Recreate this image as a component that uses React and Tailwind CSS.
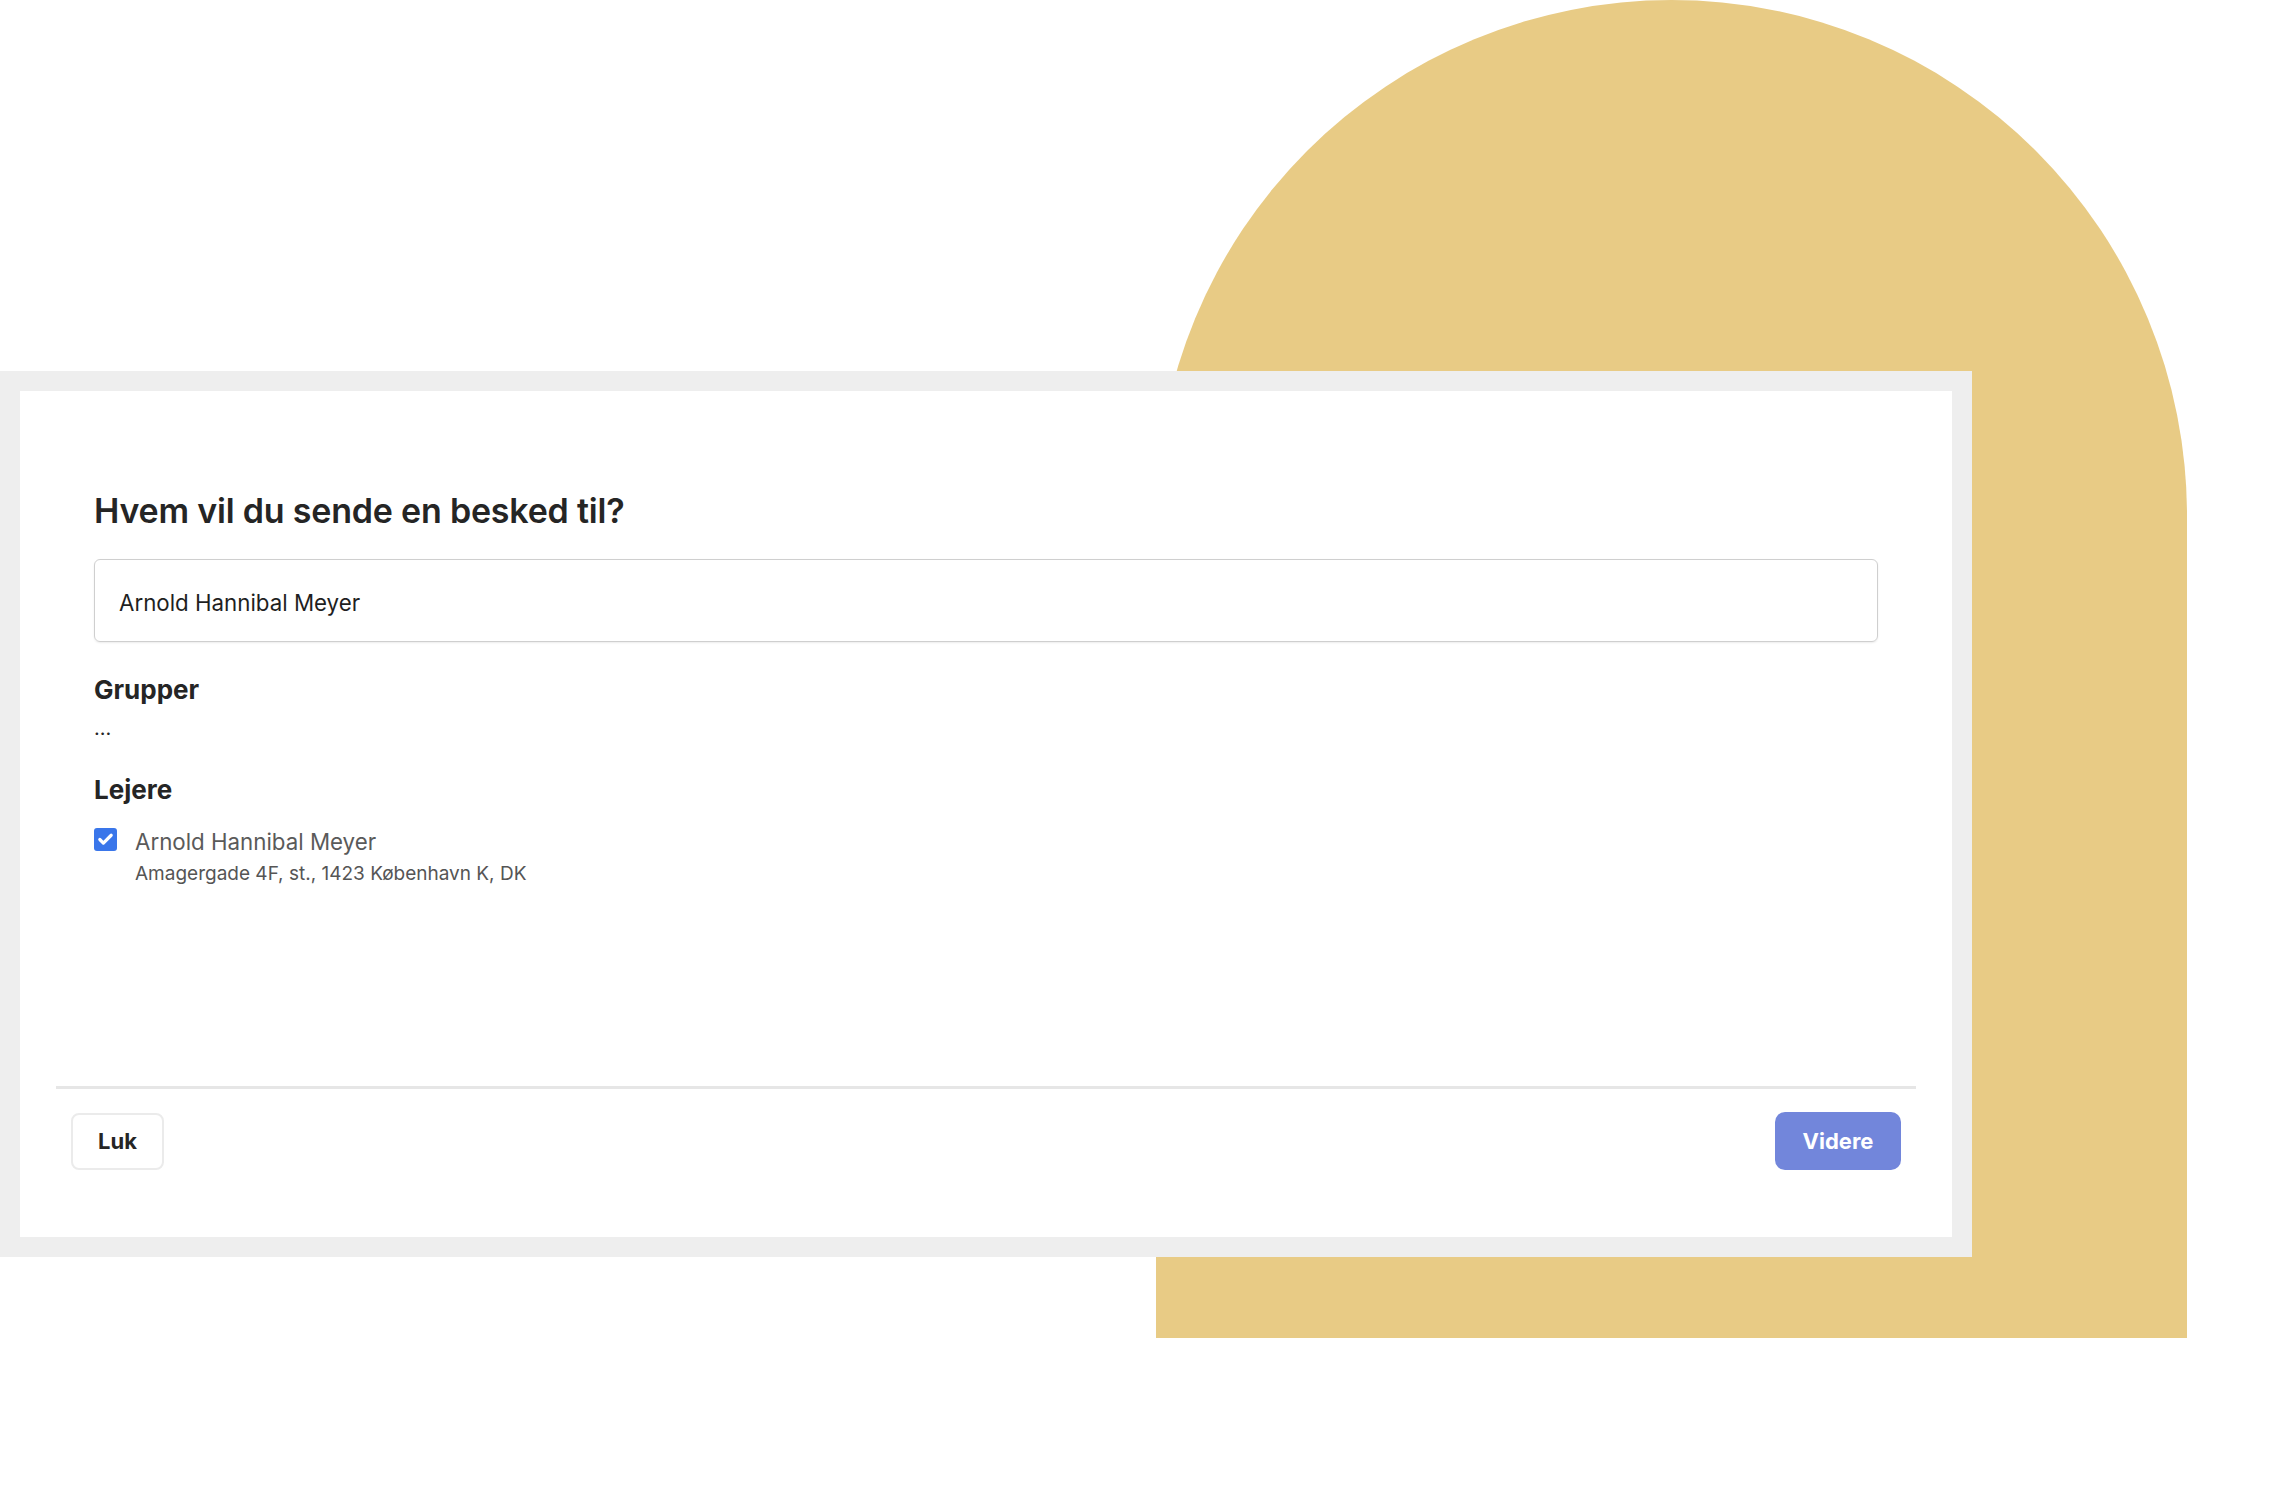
import { Check } from "lucide-react";

const App = () => {
    return (
        <div className="relative min-h-[1510px] w-full overflow-hidden bg-white font-['Inter',sans-serif] text-[#252525]">
            {/* background arch */}
            <div className="absolute left-[1156px] top-0 h-[1338px] w-[1031px] rounded-t-full bg-[#e8cb85]" />

            <div className="relative z-10 pt-[371px]">
                <div className="w-[1972px] bg-[#eeeeee] p-5">
                    <div className="flex h-[846px] flex-col bg-white">
                        <div className="flex-1 px-[74px] pt-[100px]">
                            <h1 className="text-[34px] font-semibold leading-[40px] tracking-[-0.2px]">
                                Hvem vil du sende en besked til?
                            </h1>

                            <div className="mt-[28px] flex h-[83px] items-center rounded-[6px] border border-[#cfcfcf] px-[24px] pt-[5px] shadow-[0_1px_2px_rgba(0,0,0,0.08)]">
                                <span className="text-[22.3px] text-[#1f1f1f]">Arnold Hannibal Meyer</span>
                            </div>

                            <h2 className="mt-[33px] text-[26px] font-bold leading-[30px]">Grupper</h2>
                            <p className="mt-[11px] text-[20px] leading-[24px]">...</p>

                            <h2 className="mt-[35px] text-[26px] font-bold leading-[30px]">Lejere</h2>
                            <div className="mt-[23px] flex items-start gap-[18px]">
                                <span className="flex h-[23px] w-[23px] items-center justify-center rounded-[3px] bg-[#3a76ea]">
                                    <Check className="h-[17px] w-[17px] text-white" strokeWidth={4.5} />
                                </span>
                                <div>
                                    <p className="text-[22.3px] leading-[28px] text-[#5a5a5a]">Arnold Hannibal Meyer</p>
                                    <p className="mt-[7px] text-[19px] leading-[22px] text-[#555555]">
                                        Amagergade 4F, st., 1423 København K, DK
                                    </p>
                                </div>
                            </div>
                        </div>

                        <div className="mx-[36px] border-t-[3px] border-[#e6e6e6]" />

                        <div className="flex items-center justify-between px-[51px] pb-[67px] pt-[23px]">
                            <button className="h-[57px] w-[93px] rounded-[8px] border-2 border-[#ebebeb] bg-white text-[22px] font-bold text-[#252525]">
                                Luk
                            </button>
                            <button className="h-[58px] w-[126px] rounded-[10px] bg-[#7286db] text-[22px] font-bold text-white">
                                Videre
                            </button>
                        </div>
                    </div>
                </div>
            </div>
        </div>
    );
};

export default App;
